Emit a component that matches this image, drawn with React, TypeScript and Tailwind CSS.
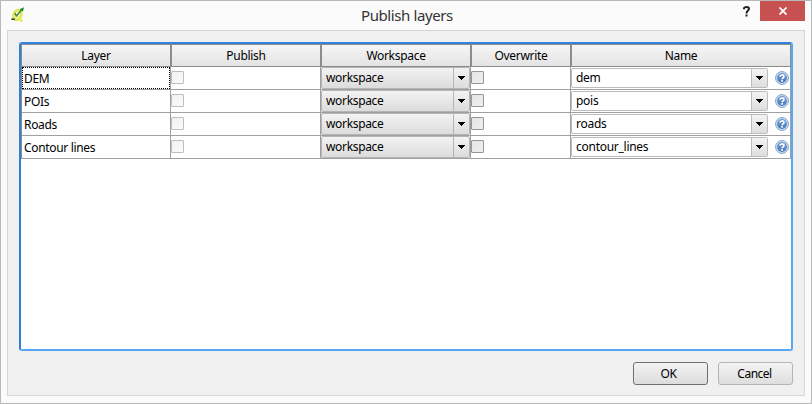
import React from "react";

const rows = [
  { layer: "DEM", name: "dem" },
  { layer: "POIs", name: "pois" },
  { layer: "Roads", name: "roads" },
  { layer: "Contour lines", name: "contour_lines" },
];

function Arrow() {
  return (
    <svg width="7" height="4" viewBox="0 0 7 4" shapeRendering="crispEdges">
      <path d="M0 0h7v1H6v1H5v1H4v1H3V3H2V2H1V1H0z" fill="#000" />
    </svg>
  );
}

function HelpIcon() {
  return (
    <svg width="14" height="14" viewBox="0 0 14 14">
      <defs>
        <linearGradient id="help" x1="0" y1="0" x2="0" y2="1">
          <stop offset="0" stopColor="#6f9bd0" />
          <stop offset="1" stopColor="#4a7cba" />
        </linearGradient>
      </defs>
      <circle cx="7" cy="7" r="6.4" fill="#d5e2f1" stroke="#7b9fcb" />
      <circle cx="7" cy="7" r="4.9" fill="url(#help)" />
      <path d="M5 5.6C5.1 3.4 9 3.4 9 5.4C9 6.8 7.1 6.8 7.1 8.3" fill="none" stroke="#fff" strokeWidth="1.6" />
      <rect x="6.2" y="9.1" width="1.8" height="1.6" fill="#fff" />
    </svg>
  );
}

function Logo() {
  return (
    <svg width="16" height="16" viewBox="0 0 16 16">
      <ellipse cx="6.4" cy="8" rx="3.8" ry="4.9" transform="rotate(18 6.4 8)" fill="#fbfbf0" stroke="#dfe75c" strokeWidth="2.9" />
      <path d="M6 9.6l2.6-.8L11.8 13.6l-.6 1.4-2.4-.4z" fill="#e3ec5c" />
      <path d="M4 6l1.3 3L10.5 3" fill="none" stroke="#2c7f22" strokeWidth="1.3" />
      <path d="M8.6 2.2L12.9.2L12 4.6z" fill="#118a18" />
      <path d="M.3 12.2h3.6" stroke="#33451c" strokeWidth="1.5" />
    </svg>
  );
}

function Check({ dim }: { dim?: boolean }) {
  return (
    <span
      className={
        "mt-1 block h-[13px] w-[13px] rounded-[1px] border bg-linear-to-br " +
        (dim ? "border-[#bfbfbf] from-[#f0f0f0] to-[#fbfbfb]" : "border-[#969696] from-[#e4e4e4] to-[#f0f0f0]")
      }
    />
  );
}

function Head({ children }: { children: string }) {
  return (
    <div className="flex items-center justify-center border-r-2 border-[#8c8c8c] bg-linear-to-b from-[#f6f6f6] to-[#e3e3e3] pt-px last:border-r">
      {children}
    </div>
  );
}

export default function App() {
  return (
    <div className="flex h-[404px] w-[812px] flex-col border border-[#b9b9b9] bg-[#fbfbfb] px-1.5 pb-[7px] font-['Noto_Sans','Open_Sans',sans-serif] text-[12px] leading-4 text-black">
      <header className="flex h-[29px] shrink-0 items-start">
        <div className="ml-1 mt-1.5 w-[200px]">
          <Logo />
        </div>
        <h1 className="mt-1 flex-1 pl-[150px] text-[15px] leading-[21px] tracking-[-0.4px] text-[#333]">Publish layers</h1>
        <span className="mr-[10px] mt-[5px] flex h-[11px] w-[7px] items-center justify-center">
          <svg width="7" height="11" viewBox="0 0 7 11">
            <path d="M1 3.2V2.4C1 .6 6 .6 6 2.7C6 4.6 3.5 4.5 3.5 7.4" fill="none" stroke="#222" strokeWidth="2" />
            <rect x="2.5" y="8.5" width="2" height="2" fill="#222" />
          </svg>
        </span>
        <span className="flex h-5 w-[45px] items-center justify-center bg-[#c75050]">
          <svg width="8" height="8" viewBox="0 0 8 8">
            <path d="M.5.5l7 7M7.5.5l-7 7" stroke="#fff" strokeWidth="1.8" />
          </svg>
        </span>
      </header>
      <main className="flex-1 border border-[#d6d6d6] bg-[#f0f0f0] px-[11px] pt-[11px]">
        <div className="h-[309px] w-[774px] rounded-[3px] border-2 border-[#57a8f5] border-l-[#2f7fd4] border-t-[#2f85dc] bg-white">
          <div className="w-[770px] border-l border-[#8c8c8c]">
            <div className="grid h-[23px] grid-cols-[150px_150px_150px_100px_219px] border-y border-[#8c8c8c] tracking-[-0.3px]">
              <Head>Layer</Head>
              <Head>Publish</Head>
              <Head>Workspace</Head>
              <Head>Overwrite</Head>
              <Head>Name</Head>
            </div>
            {rows.map((row, i) => (
              <div
                key={row.layer}
                className="grid h-[23px] grid-cols-[149px_150px_150px_100px_220px] border-b border-[#a0a0a0] tracking-[-0.33px]"
              >
                <div className="border-r border-[#a0a0a0]">
                  <div
                    className={
                      "flex h-[22px] items-center border pl-px pt-px " +
                      (i === 0 ? "border-dotted border-black" : "border-transparent")
                    }
                  >
                    {row.layer}
                  </div>
                </div>
                <div className="border-r border-[#a0a0a0]">
                  <Check dim />
                </div>
                <div className="border-r border-[#a0a0a0]">
                  <div className="flex h-[22px] rounded-[2px] border border-[#b4b4b4] bg-linear-to-b from-[#f3f3f3] to-[#dcdcdc]">
                    <span className="flex-1 pl-1 pt-0.5">workspace</span>
                    <span className="flex w-[16px] items-center justify-center border-l border-[#b4b4b4]">
                      <Arrow />
                    </span>
                  </div>
                </div>
                <div className="border-r border-[#a0a0a0]">
                  <Check />
                </div>
                <div className="flex border-r border-[#a0a0a0]">
                  <div className="mt-px flex h-5 w-[197px] rounded-[2px] border border-[#bcbcbc] bg-white">
                    <span className="flex-1 pl-1 pt-px tracking-[-0.27px]">{row.name}</span>
                    <span className="flex w-[16px] items-center justify-center border-l border-[#bcbcbc] bg-linear-to-b from-[#f3f3f3] to-[#dedede]">
                      <Arrow />
                    </span>
                  </div>
                  <span className="ml-[7px] mt-1">
                    <HelpIcon />
                  </span>
                </div>
              </div>
            ))}
          </div>
        </div>
        <footer className="mt-[11px] flex justify-end gap-[10px] tracking-[-0.5px]">
          <button className="h-[23px] w-[75px] rounded-[3px] border border-[#707070] bg-linear-to-b from-[#f3f3f3] to-[#dcdcdc] pr-1">OK</button>
          <button className="h-[23px] w-[75px] rounded-[3px] border border-[#b4b4b4] bg-linear-to-b from-[#f3f3f3] to-[#dedede] pr-0.5">Cancel</button>
        </footer>
      </main>
    </div>
  );
}
